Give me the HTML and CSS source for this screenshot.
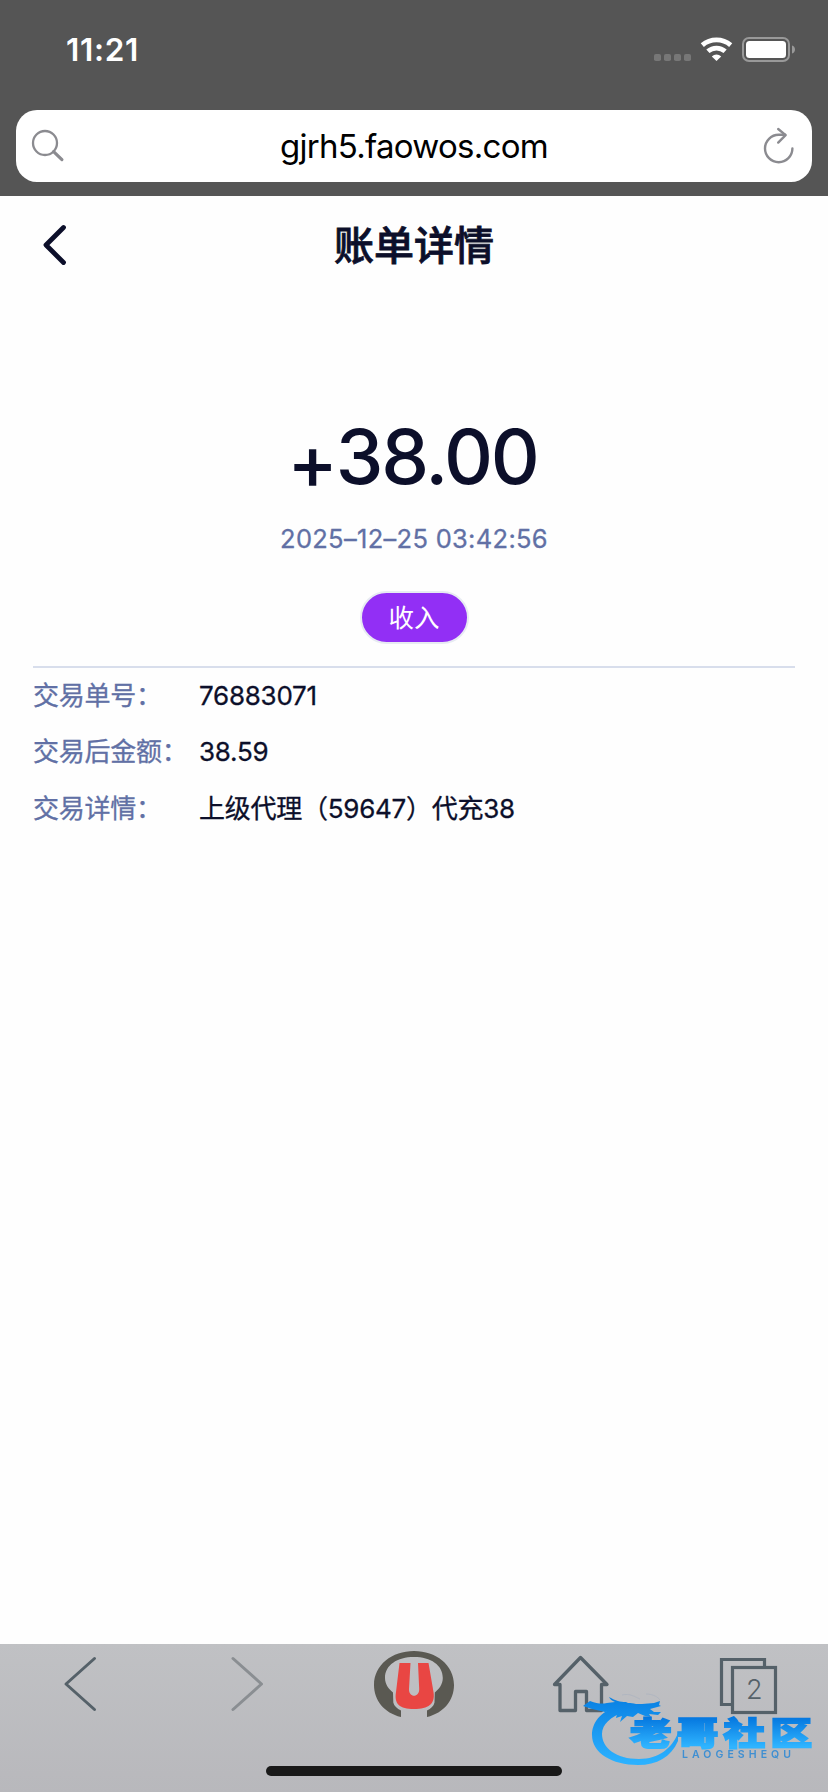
FILE: index.html
```html
<!DOCTYPE html>
<html lang="zh-CN">
<head>
<meta charset="utf-8">
<title>账单详情</title>
<link rel="stylesheet" href="styles.css">
</head>
<body>
<div class="screen">
  <header class="chrome">
    <div class="status">
      <span class="time">11:21</span>
      <svg class="status-icons" width="144" height="30" viewBox="0 0 144 30">
        <g fill="#777"><rect x="1" y="19" width="7" height="7" rx="1.8"/><rect x="11" y="19" width="7" height="7" rx="1.8"/><rect x="21" y="19" width="7" height="7" rx="1.8"/><rect x="31" y="19" width="7" height="7" rx="1.8"/></g>
        <g fill="none" stroke="#fff" stroke-width="4.8"><path d="M49.3 10.1a22 22 0 0 1 28.4 0"/><path d="M54.9 16.3a13 13 0 0 1 17.2 0"/></g>
        <path d="M63.5 26l-4.7-4.6a7 7 0 0 1 9.4 0z" fill="#fff"/>
        <rect x="90" y="3" width="46" height="23" rx="6" fill="none" stroke="#999" stroke-width="2"/>
        <rect x="93" y="6" width="40" height="17" rx="3.5" fill="#fff"/>
        <path d="M139 10.5c4 1 4 7 0 8z" fill="#999"/>
      </svg>
    </div>
    <div class="address">
      <svg width="34" height="34" viewBox="0 0 34 34" fill="none" stroke="#8b8b90" stroke-linecap="round"><circle cx="14" cy="14" r="12" stroke-width="2.3"/><path d="M22.6 22.6l8.3 8" stroke-width="3.2"/></svg>
      <span class="url">gjrh5.faowos.com</span>
      <svg width="32" height="38" viewBox="0 0 32 38" fill="none" stroke="#8b8b90" stroke-width="2.4" stroke-linecap="round" stroke-linejoin="round"><path d="M29.4 21.5a13.7 13.7 0 1 1-13.7-13.7h6.5"/><path d="M15.2 2l7.4 6.2-7.4 7.4"/></svg>
    </div>
  </header>
  <main class="page">
    <nav class="titlebar">
      <svg class="back" width="28" height="44" viewBox="0 0 28 44" fill="none" stroke="#0c0f2a" stroke-width="4.8" stroke-linecap="round" stroke-linejoin="round"><path d="M23.500 4.500L6 22l17.500 17.500"/></svg>
      <h1 class="title">账单详情</h1>
    </nav>
    <section class="summary">
      <div class="amount"><span class="plus">+</span>38.00</div>
      <div class="date">2025–12–25 03:42:56</div>
      <span class="tag">收入</span>
    </section>
    <dl class="details">
      <div class="row"><dt>交易单号：</dt><dd>76883071</dd></div>
      <div class="row"><dt>交易后金额：</dt><dd>38.59</dd></div>
      <div class="row"><dt>交易详情：</dt><dd>上级代理（59647）代充38</dd></div>
    </dl>
  </main>
  <footer class="toolbar">
    <div class="tools">
      <svg class="tool" width="166" height="80" viewBox="0 0 166 80" fill="none" stroke="#556169" stroke-width="3" stroke-linecap="round" stroke-linejoin="round"><path d="M94.500 14.500L66 40l28.500 25.500"/></svg>
      <svg class="tool" width="166" height="80" viewBox="0 0 166 80" fill="none" stroke="#8a8e92" stroke-width="3" stroke-linecap="round" stroke-linejoin="round"><path d="M67 14.500L95.500 40 67 65.500"/></svg>
      <svg class="tool" width="166" height="80" viewBox="0 0 166 80">
        <path fill="#5a5952" d="M69 73C52 69 42 56 42 41 42 21 60 7 82 7s40 14 40 34c0 15-10 28-27 32v-6.500c4-2 6.800-4.500 7.500-8l.3-10c4.500-3.500 8-8.500 8-14.500 0-13-12-21-28.800-21s-29 8-29 21c0 6 3.500 11 8 14.500l.3 10c.7 3.500 3.700 6 7.700 8z"/>
        <path fill="#e94643" d="M67.500 19h11L77 45c-.4 9 10.500 9 10.200 0L86 19h10.500l5 29c2 12-5 17-19.500 17s-20-5-18-17z"/>
      </svg>
      <svg class="tool" width="166" height="80" viewBox="0 0 166 80" fill="none" stroke="#556169" stroke-width="3.300" stroke-linejoin="round" stroke-linecap="round"><path d="M56.500 40.500L82.500 13.500l26.500 27h-5.500v26H88.500V47.500H77.500v19H62v-26z"/></svg>
      <svg class="tool" width="166" height="80" viewBox="0 0 166 80" fill="none" stroke="#556169" stroke-width="3.200"><path d="M68.500 60.500H57.500V15.500h43v8"/><rect x="68.500" y="23.500" width="43" height="45"/><text class="count" x="90.300" y="55" text-anchor="middle">2</text></svg>
    </div>
    <div class="home-indicator"></div>
  </footer>
  <svg class="watermark" width="246" height="90" viewBox="0 0 246 90">
    <defs>
      <linearGradient id="blue" gradientUnits="userSpaceOnUse" x1="0" y1="10" x2="0" y2="72"><stop offset="0" stop-color="#0a82e4"/><stop offset="1" stop-color="#2bb1ff"/></linearGradient>
      <linearGradient id="ink" gradientUnits="userSpaceOnUse" x1="0" y1="-27" x2="0" y2="2"><stop offset="0" stop-color="#0577df"/><stop offset="1" stop-color="#2fb4ff"/></linearGradient>
    </defs>
    <g fill="url(#blue)">
      <path d="M36 17C18 21 10 33 10 45c0 18 20 30 46 30 19 0 33-8 40-24v-8C90 58 77 69 57 69 34 69 20 58 20 44c0-10 9-17 21-22l10-5z"/>
      <path d="M8 11c8 3 12 3 17 2l8-1c-3-1-5-3-6-5 7 4 11 5 17 5l2 1c3 0 5 0 8 1l6 0 12-1 6-2-1 4 2 1-11 3 4 3 7 0-3 3-9-1 2 3-6-1-7-3-5 4-6-1-7 6 2-6-6 2 1-4-6 0 4-3-10 1-13-3-9-3z"/>
    </g>
    <path d="M40 5C48 3 53 7 58 9M64 4c7 0 12 3 14 6" fill="none" stroke="#adb4bf" stroke-width=".8"/>
    <text class="brand" transform="translate(48 54.500) scale(1.300 1)" fill="url(#ink)" stroke="url(#ink)">老哥社区</text>
    <text class="brand-latin" x="100" y="68.200" textLength="109">LAOGESHEQU</text>
  </svg>
</div>
</body>
</html>
```
FILE: styles.css
```css
* { box-sizing: border-box; }
body { margin: 0; background: #fefefe; font-family: Inter, "Noto Sans CJK SC", sans-serif; color: #0c0f2a; }
.screen { position: relative; width: 828px; height: 1792px; display: flex; flex-direction: column; overflow: hidden; }

.chrome { height: 196px; background: #555; padding: 0 16px; }
.status { height: 110px; display: flex; justify-content: space-between; align-items: flex-start; padding: 30px 17px 0 50px; }
.time { color: #fff; font-size: 31.5px; font-weight: 600; line-height: 40px; letter-spacing: 0.7px; }
.status-icons { margin-top: 5px; margin-right: -2px; }
.address { height: 72px; background: #fff; border-radius: 21px; display: flex; align-items: center; justify-content: space-between; padding: 0 17px 0 15px; }
.url { color: #000; font-size: 33px; line-height: 40px; letter-spacing: -0.72px; }

.page { flex: 1; }
.titlebar { height: 98px; display: grid; grid-template-columns: 80px 1fr 80px; align-items: center; }
.back { margin-left: 40px; }
.title { margin: 0; padding-bottom: 4px; text-align: center; font: 500 40px/58px "Noto Sans CJK SC", sans-serif; -webkit-text-stroke: 0.8px #0c0f2a; }
.summary { display: flex; flex-direction: column; align-items: center; padding-top: 116px; }
.amount { font-size: 76px; line-height: 92px; font-weight: 500; letter-spacing: -2.2px; margin-right: 3px; }
.plus { display: inline-block; transform: translateY(5px); }
.date { margin-top: 20px; font-size: 25.5px; line-height: 34px; letter-spacing: 0.3px; color: #6170a5; -webkit-text-stroke: 0.3px #6170a5; }
.tag { margin-top: 35px; width: 109px; height: 53px; border: 2px solid #e7ebf2; border-radius: 27px; background: #922ff5; color: #fff; font-size: 25.5px; line-height: 50px; text-align: center; }

.details { margin: 22px 33px 0; border-top: 2px solid #d8deec; }
.row { display: flex; height: 56.4px; font-size: 26px; line-height: 56px; letter-spacing: -0.25px; }
.row dt { width: 166px; color: #6170a5; white-space: nowrap; -webkit-text-stroke: 0.3px #6170a5; }
.row dd { margin: 0; white-space: nowrap; -webkit-text-stroke: 0.3px #0c0f2a; }

.toolbar { height: 148px; background: linear-gradient(#c0c1c4, #b8b8bc); }
.tools { display: flex; height: 122px; margin-right: -2px; }
.tool { flex: none; }
.count { font-size: 27px; font-weight: 300; fill: #556169; stroke: none; }
.home-indicator { width: 296px; height: 10px; margin: 0 auto; border-radius: 5px; background: #191919; }

.watermark { position: absolute; left: 582px; top: 1690px; filter: blur(0.7px); }
.brand { font: 900 32px "Noto Sans CJK SC", sans-serif; stroke-width: 1.8px; letter-spacing: 4px; }
.brand-latin { font: 600 10.5px Inter, sans-serif; fill: #3f8fd2; }
```
